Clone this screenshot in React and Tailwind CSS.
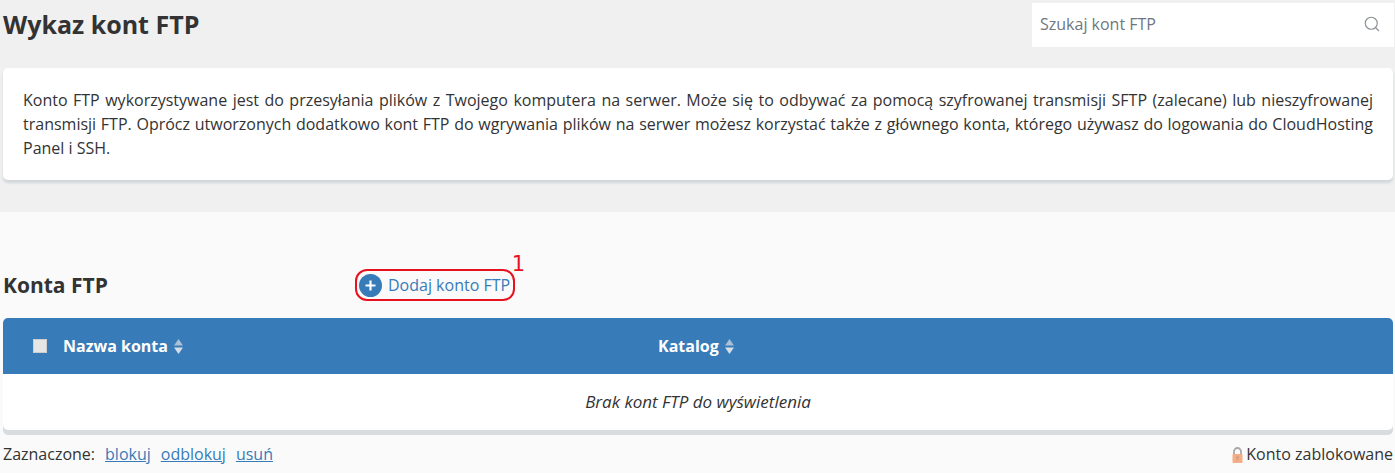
import { Search } from "lucide-react"

function SortArrows() {
  return (
    <svg width="9" height="15" viewBox="0 0 9 15" className="ml-[6px] mt-[1px]">
      <path d="M4.5 0L9 6.5H0z" fill="#a9c0d6" />
      <path d="M4.5 15L0 8.5h9z" fill="#d5dde5" />
    </svg>
  )
}

function LockIcon() {
  return (
    <svg width="11" height="16" viewBox="0 0 11 16" className="mt-[5px] mr-[3px]">
      <path d="M2 8V4.5a3.5 3.5 0 0 1 7 0V8" fill="none" stroke="#a9a9a9" strokeWidth="1.8" />
      <rect x="0.5" y="7" width="10" height="9" rx="1" fill="#f6ad86" />
      <path d="M5.5 8.5l2 2.5h-1.2V13.5H4.7V11H3.5z" fill="#c9a08a" />
    </svg>
  )
}

export default function App() {
  return (
    <div className="h-[473px] w-[1395px] overflow-hidden bg-[#f0f0f0] font-['Open_Sans',sans-serif] text-[16px] text-[#333333]">
      <div className="h-[212px] pr-[2px] pl-[3px]">
        <div className="flex h-[68px] items-start justify-between">
          <h1 className="mt-[6px] text-[25px] leading-[36px] font-bold">Wykaz kont FTP</h1>
          <div className="mt-[3px] mr-[-1px] flex h-[44px] w-[362px] items-center justify-between bg-white pr-[13px] pb-[2px] pl-[8px] text-[#6f7780]">
            <span>Szukaj kont FTP</span>
            <Search size={18} strokeWidth={1.5} className="text-[#8a8f94]" />
          </div>
        </div>
        <div className="h-[112px] rounded-[5px] bg-white px-[20px] pt-[20px] leading-[24px] shadow-[0_3px_3px_#cfd6da]">
          <p className="text-justify">
            Konto FTP wykorzystywane jest do przesyłania plików z Twojego komputera na serwer. Może się to odbywać za pomocą szyfrowanej transmisji SFTP (zalecane) lub nieszyfrowanej transmisji FTP. Oprócz utworzonych dodatkowo kont FTP do wgrywania plików na serwer możesz korzystać także z głównego konta, którego używasz do logowania do CloudHosting Panel i SSH.
          </p>
        </div>
      </div>

      <div className="h-[261px] bg-[#fafafa] pt-[56px] pr-[2px] pl-[3px]">
        <div className="flex h-[50px] items-start">
          <h2 className="mt-[2px] w-[352px] text-[21px] leading-[30px] font-bold">Konta FTP</h2>
          <div className="relative mt-[1px]">
            <a className="flex h-[32px] items-center gap-[6px] rounded-[12px] border-2 border-[#e8121f] pr-[3px] pl-[2px] text-[#377bb9]">
              <span className="flex h-[23px] w-[23px] items-center justify-center rounded-full bg-[#377bb9]">
                <svg width="11" height="11" viewBox="0 0 11 11">
                  <path d="M5.5 0.5v10M0.5 5.5h10" stroke="#ffffff" strokeWidth="2.2" />
                </svg>
              </span>
              Dodaj konto FTP
            </a>
            <span className="absolute top-[-17px] right-[-10px] font-['DejaVu_Sans',sans-serif] text-[21px] leading-[24px] text-[#e8121f]">1</span>
          </div>
        </div>

        <div className="rounded-[5px] bg-white shadow-[0_5px_0_#d8dcde]">
          <div className="flex h-[56px] items-center rounded-t-[5px] bg-[#377bb9] font-bold text-white">
            <div className="flex w-[655px] items-center pl-[30px]">
              <span className="mr-[16px] h-[14px] w-[14px] border border-[#cfcfcf] bg-[#e6e6e6]" />
              Nazwa konta
              <SortArrows />
            </div>
            <div className="flex items-center">
              Katalog
              <SortArrows />
            </div>
          </div>
          <div className="flex h-[56px] items-center justify-center text-[17px] italic">Brak kont FTP do wyświetlenia</div>
        </div>

        <div className="mt-[12px] flex items-start justify-between leading-[24px]">
          <div className="flex gap-[10px]">
            <span>Zaznaczone:</span>
            <a className="text-[#377bb9] underline">blokuj</a>
            <a className="text-[#377bb9] underline">odblokuj</a>
            <a className="text-[#377bb9] underline">usuń</a>
          </div>
          <div className="flex items-start">
            <LockIcon />
            <span>Konto zablokowane</span>
          </div>
        </div>
      </div>
    </div>
  )
}
